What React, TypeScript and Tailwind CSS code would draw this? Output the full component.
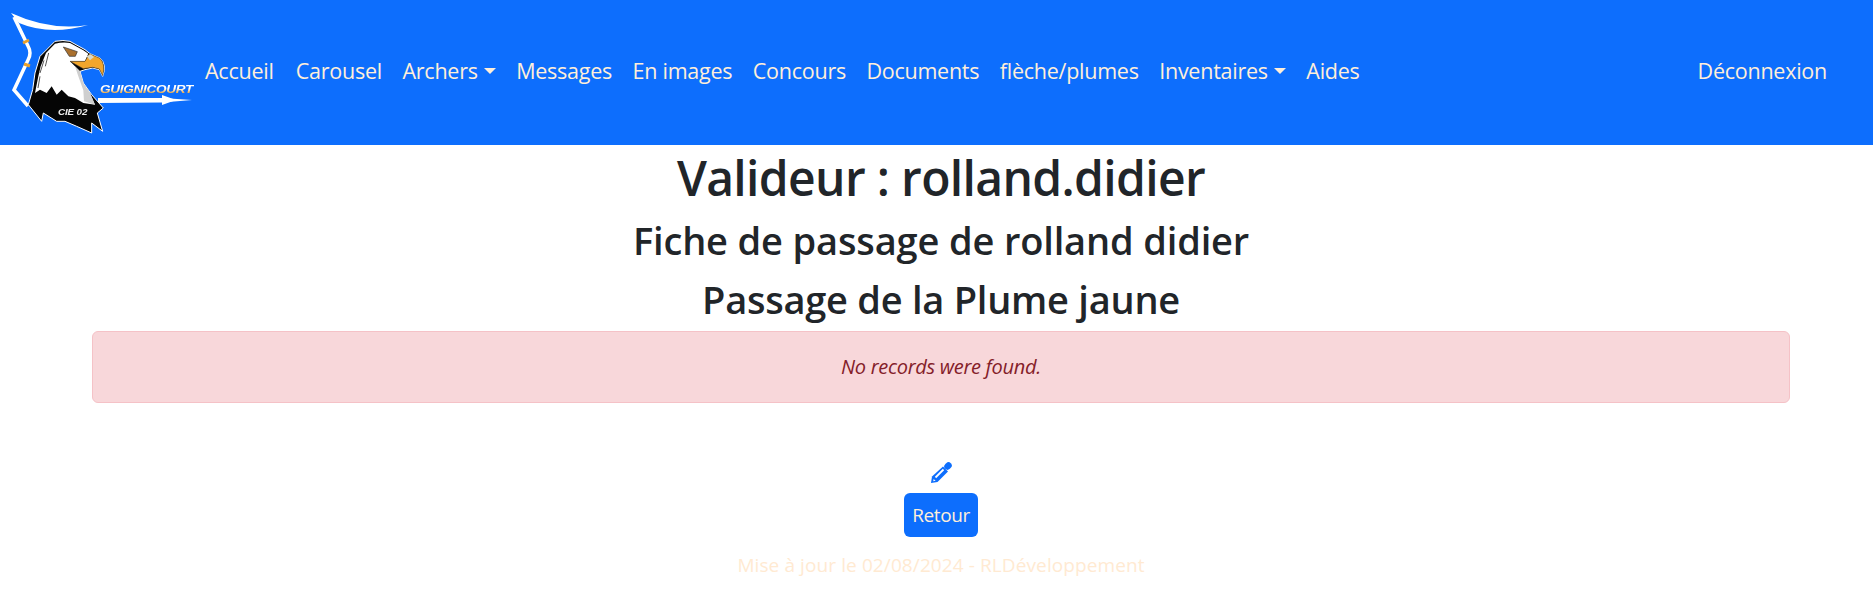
const links = ["Accueil", "Carousel", "Archers", "Messages", "En images", "Concours", "Documents", "flèche/plumes", "Inventaires", "Aides"];
const dropdowns = ["Archers", "Inventaires"];

function Logo() {
  return (
    <svg width="194" height="136" viewBox="0 0 194 136" className="shrink-0 blur-[0.4px]">
      <defs>
        <linearGradient id="name" x1="0" y1="0" x2="0" y2="1">
          <stop offset="0.45" stopColor="#fff" />
          <stop offset="0.8" stopColor="#efb050" />
        </linearGradient>
      </defs>
      {/* bow */}
      <path d="M11 10 Q50 28 88 22 Q50 33 19 20 Z" fill="#fff" />
      <path d="M14 14 L28 43 Q32 50 28 57 L21 72 L14 87 L28 103" fill="none" stroke="#fff" strokeWidth="3.5" />
      <path d="M23 40 L29 37 M24 61 L30 63" stroke="#e8a02c" strokeWidth="3" />
      {/* arrow */}
      <path d="M98 95 L162 95 L192 97 L162 99.5 L98 100 Z" fill="#fff" />
      <path d="M162 92 L176 97 L162 102 Z" fill="#fff" />
      <text x="100" y="90" fill="url(#name)" fontFamily="'Liberation Sans', sans-serif" fontSize="11" fontWeight="700" fontStyle="italic" textLength="93" lengthAdjust="spacingAndGlyphs">GUIGNICOURT</text>
      {/* eagle, drawn in 3x units */}
      <g transform="translate(20 30) scale(0.3333)">
        <path d="M105 25 Q130 20 150 25 L195 50 L210 62 L240 75 Q262 95 248 130 L238 110 L218 105 L195 110 L180 115 L190 150 L215 185 L250 225 L232 240 L248 295 L215 270 L215 300 L170 280 L135 265 L110 265 L70 240 L65 265 L25 215 L38 170 L45 120 L60 70 Z" fill="#050505" stroke="#fff" strokeWidth="3" />
        <path d="M105 32 Q130 26 150 30 L190 52 L205 62 L195 85 L150 85 L180 115 L190 150 L210 180 L225 215 L190 210 L165 195 L145 190 L125 170 L110 185 L95 160 L80 180 L60 170 L45 180 L55 130 L62 100 L78 60 Z" fill="#fff" />
        <path d="M165 100 L180 115 L190 150 L210 180 L225 215 L192 205 L190 172 L175 130 Z" fill="#cfcfcf" />
        <path d="M150 85 L195 85 L208 62 L240 76 Q258 95 248 128 L238 108 L218 103 L190 107 Z" fill="#f2a62c" stroke="#333" strokeWidth="1.5" />
        <path d="M200 70 L212 64 L222 72 L210 82 Z" fill="#d9d9c8" />
        <path d="M130 42 L172 56 L166 70 L148 70 Z" fill="#a9702e" stroke="#2c2c2c" strokeWidth="2" />
        <path d="M72 82 L60 120 M86 60 L76 100 M60 130 L54 165" stroke="#333" strokeWidth="2.5" fill="none" />
        <text x="114" y="247" fill="#ededed" fontFamily="'Liberation Sans', sans-serif" fontSize="25" fontWeight="700" fontStyle="italic" textLength="88" lengthAdjust="spacingAndGlyphs">CIE 02</text>
      </g>
    </svg>
  );
}

function Pencil() {
  return (
    <svg width="21" height="21" viewBox="0 0 21 21" className="text-[#0d6efd]">
      <path d="M16.5 4.5 L17.5 3.5" stroke="currentColor" strokeWidth="6.5" strokeLinecap="round" />
      <path d="M12 4.5 L17 9.5 L6.5 20 L0 21 L1 14.5 Z" fill="currentColor" />
      <path d="M4.5 15.5 L12.5 7.5" stroke="#fff" strokeWidth="1.8" />
      <path d="M2.6 17 L4.6 18.8 L2.2 19.3 Z" fill="#fff" />
    </svg>
  );
}

export default function App() {
  return (
    <div className="min-h-[615px] bg-white font-['Open_Sans',sans-serif] text-[#212529]">
      <nav className="flex h-[145px] items-center bg-[#0d6efd] pb-[3px] pr-[46px] text-[21.5px] leading-[30px] text-[#ffefd9] tracking-[-0.25px]">
        <Logo />
        <ul className="ml-[1px] flex items-center">
          {links.map((l) => (
            <li key={l} className="flex items-center px-[10.25px] first:pl-[10px] first:pr-[12px]">
              {l}
              {dropdowns.includes(l) && (
                <span className="ml-[6px] h-0 w-0 border-x-[6px] border-t-[6px] border-x-transparent border-t-[#ffefd9]" />
              )}
            </li>
          ))}
        </ul>
        <span className="ml-auto">Déconnexion</span>
      </nav>
      <main className="ml-[92px] w-[1698px] text-center">
        <h1 className="text-[48px] font-semibold leading-[66px] tracking-[-0.65px]">Valideur : rolland.didier</h1>
        <h2 className="text-[38px] font-semibold leading-[58px] tracking-[-0.15px]">Fiche de passage de rolland didier</h2>
        <h3 className="text-[38px] font-semibold leading-[61px] tracking-[-0.25px]">Passage de la Plume jaune</h3>
        <div className="mt-[1px] flex h-[72px] items-center justify-center rounded-[6px] border border-[#f5c2c7] bg-[#f8d7da] text-[20px] italic text-[#842029] tracking-[-0.3px]">
          No records were found.
        </div>
        <div className="mt-[59px] flex flex-col items-center">
          <Pencil />
          <button className="mt-[10px] h-[44px] w-[74px] rounded-[6px] bg-[#0d6efd] text-[19px] text-[#ffefd9] tracking-[-0.4px]">Retour</button>
          <p className="mt-[14px] text-[19px] leading-[28px] text-[#ffead2] tracking-[0.1px]">Mise à jour le 02/08/2024 - RLDéveloppement</p>
        </div>
      </main>
    </div>
  );
}
